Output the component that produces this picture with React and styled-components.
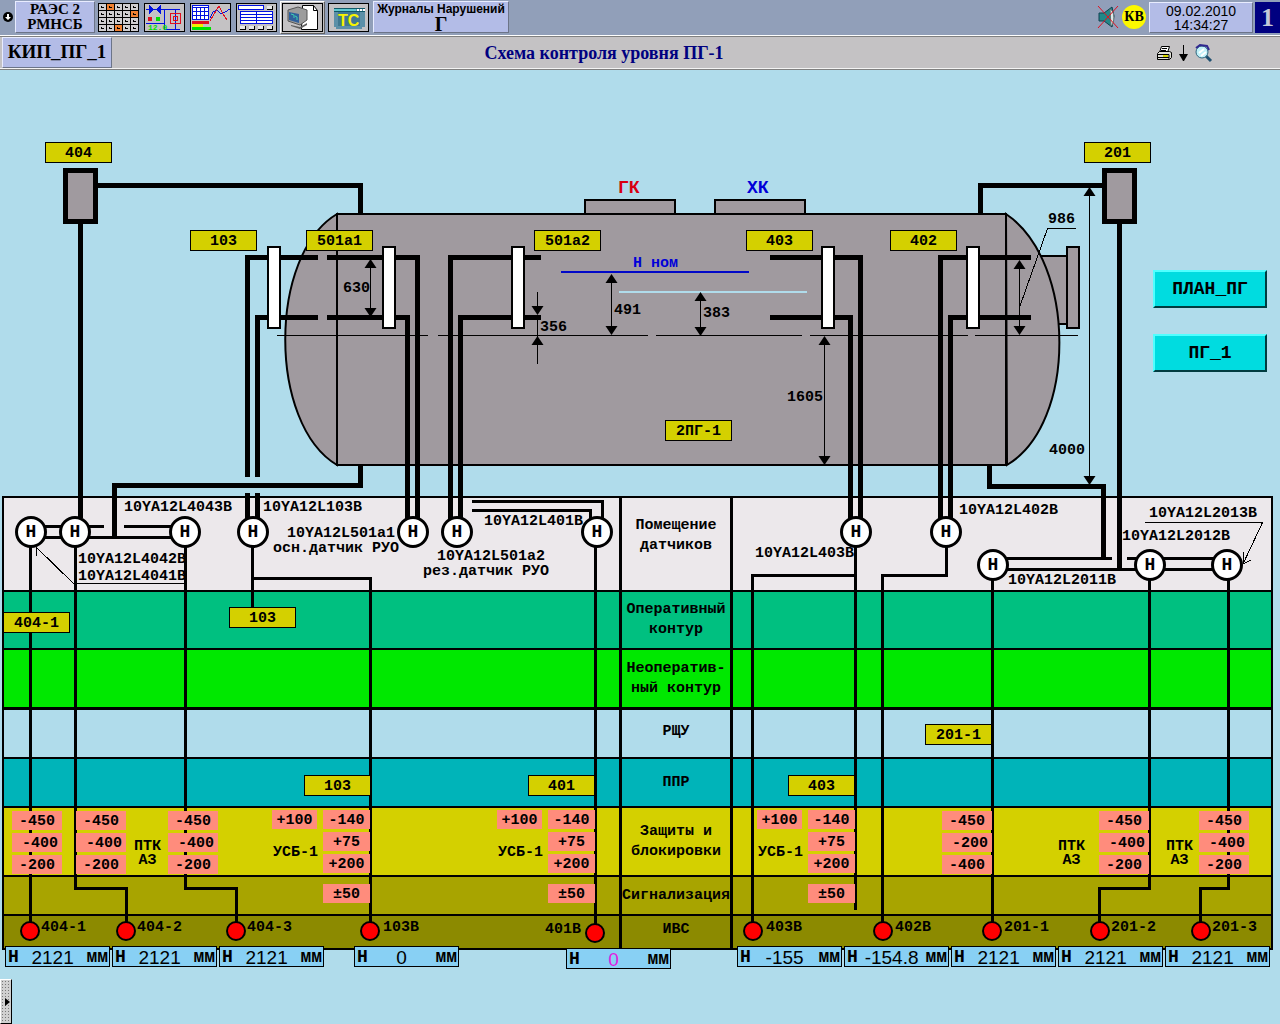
import React from 'react'
import styled, { createGlobalStyle, css } from 'styled-components'

const HEADER = 70

const INK = '#000'
const STEEL = '#a09a9f'
const YELLOW = '#d4d000'
const SKY = '#b0dceb'

// diagram coordinates: x is a share of the 1280 wide drawing, y is in pixels
const at = css`
  position: absolute;
  left: ${({ $x }) => ($x / 1280) * 100}%;
  top: ${({ $y }) => $y - HEADER}px;
`

const zones = [
  { label: ['Помещение', 'датчиков'], color: '#ece8eb', height: 94, lift: 16 },
  { label: ['Оперативный', 'контур'], color: '#00c080', height: 58 },
  { label: ['Неоператив-', 'ный контур'], color: '#00e800', height: 59 },
  { label: ['РЩУ'], color: SKY, height: 50, line: 3, lift: 4 },
  { label: ['ППР'], color: '#00b4b9', height: 49 },
  { label: ['Защиты и', 'блокировки'], color: YELLOW, height: 69 },
  { label: ['Сигнализация'], color: '#a8a400', height: 39 },
  { label: ['ИВС'], color: '#8c8a00', height: 34, lift: 4 },
]

const chips = [
  ['404', 45, 142], ['103', 190, 230], ['501а1', 306, 230], ['501а2', 534, 230],
  ['403', 746, 230], ['402', 890, 230], ['201', 1084, 142], ['2ПГ-1', 665, 420],
  ['404-1', 3, 612], ['103', 229, 607], ['201-1', 925, 724],
  ['103', 304, 775], ['401', 528, 775], ['403', 788, 775],
]

const sensors = [
  [31, 532], [75, 532], [185, 532], [253, 532], [413, 532], [457, 532],
  [597, 532], [856, 532], [946, 532], [993, 565], [1150, 565], [1227, 565],
]

const captions = [
  ['10YA12L4043B', 124, 508], ['10YA12L4042B', 78, 560], ['10YA12L4041B', 78, 577],
  ['10YA12L103B', 263, 508], ['10YA12L501a1', 287, 534], ['осн.датчик РУО', 273, 549],
  ['10YA12L401B', 484, 522], ['10YA12L501a2', 437, 557], ['рез.датчик РУО', 423, 572],
  ['10YA12L403B', 755, 554], ['10YA12L402B', 959, 511], ['10YA12L2013B', 1149, 514],
  ['10YA12L2012B', 1122, 537], ['10YA12L2011B', 1008, 581],
  ['630', 343, 289], ['491', 614, 311], ['356', 540, 328], ['383', 703, 314],
  ['1605', 787, 398], ['986', 1048, 220], ['4000', 1049, 451],
  ['УСБ-1', 273, 853], ['УСБ-1', 498, 853], ['УСБ-1', 758, 853],
  ['ПТК\nАЗ', 134, 847], ['ПТК\nАЗ', 1058, 847], ['ПТК\nАЗ', 1166, 847],
]

const settings = [
  [12, '-450', '-400', '-200'], [76, '-450', '-400', '-200'], [168, '-450', '-400', '-200'],
  [942, '-450', '-200', '-400'], [1099, '-450', '-400', '-200'], [1199, '-450', '-400', '-200'],
]

const alarms = [272, 497, 757]

const lamps = [
  ['404-1', 30, 931, 41], ['404-2', 126, 931, 137], ['404-3', 236, 931, 247],
  ['103В', 370, 931, 383], ['401В', 595, 933, 545], ['403В', 753, 931, 766],
  ['402В', 883, 931, 895], ['201-1', 992, 931, 1004], ['201-2', 1100, 931, 1111],
  ['201-3', 1201, 931, 1212],
]

const readings = [
  ['2121', 5, 946], ['2121', 112, 946], ['2121', 219, 946], ['0', 354, 946],
  ['0', 566, 948, '#e020e0'], ['-155', 737, 946], ['-154.8', 844, 946],
  ['2121', 951, 946], ['2121', 1058, 946], ['2121', 1165, 946],
]

// impulse lines between the vessel and the sensors
const pipes = [
  'M98 185.5H360.5V213', 'M80.5 224V518', 'M1102 185.5H980.5V213', 'M1119.5 224V569',
  'M318 257.5H247.5V477', 'M318 317.5H257.5V477', 'M247.5 493V520', 'M257.5 493V520',
  'M327 257.5H417.5V520', 'M327 317.5H407.5V520',
  'M541 257.5H450.5V520', 'M541 317.5H460.5V520',
  'M770 257.5H860.5V520', 'M770 317.5H850.5V520',
  'M1031 257.5H940.5V520', 'M1031 317.5H950.5V520',
  'M360.5 466V485.5H114.5V538', 'M989.5 466V486.5H1103.5V559',
]

const wires = [
  'M31 526.5H104', 'M124 526.5H185', 'M31 537.5H185',
  'M993 558.5H1112', 'M1127 558.5H1227', 'M993 569.5H1227',
  'M472 501.5H602.5V520', 'M472 510.5H590.5V522',
  'M30.5 545V922', 'M75.5 545V888.5H126.5V922', 'M185.5 545V888.5H236.5V922',
  'M252.5 545V607', 'M252.5 578.5H370.5V922', 'M595.5 545V924',
  'M855.5 545V910', 'M855.5 575.5H752.5V922', 'M946.5 545V575.5H882.5V922',
  'M992.5 578V922', 'M1149.5 578V888.5H1099.5V922', 'M1228.5 578V888.5H1200.5V922',
]

const thin = [
  'M277 335.5H428', 'M438 335.5H648', 'M656 335.5H802', 'M810 335.5H968', 'M975 335.5H1078',
  'M370.5 262V315', 'M611.5 276V333', 'M700.5 294V333', 'M824.5 338V462',
  'M1019.5 262V333', 'M1089.5 189V482', 'M537.5 292V312', 'M537.5 320V364',
  'M1076 228.5H1047.5L1020 306', 'M185 583.5H73.5L36 547V556',
  'M1145 522.5H1262.5L1243 564V552M1243 564L1251 560',
]

// [x, y of the tip, direction of the tip]
const arrows = [
  [370.5, 259, 1], [370.5, 317, -1], [611.5, 274, 1], [611.5, 335, -1],
  [700.5, 292, 1], [700.5, 336, -1], [537.5, 315, -1], [537.5, 336, 1],
  [824.5, 336, 1], [824.5, 465, -1], [1019.5, 260, 1], [1019.5, 335, -1],
  [1089.5, 187, 1], [1089.5, 485, -1],
]

const gauges = [268, 383, 512, 822, 967]

function Scheme() {
  return (
    <Drawing viewBox="0 70 1280 954" preserveAspectRatio="none" aria-hidden="true">
      <g fill={STEEL} stroke={INK} strokeWidth="2">
        <rect x="1035" y="256" width="32" height="68" />
        <rect x="1067" y="247" width="12" height="81" />
        <rect x="585" y="200" width="90" height="14" />
        <rect x="715" y="200" width="90" height="14" />
        <path d="M337 214C268 255 268 424 337 465Z" />
        <path d="M1006 214C1077 262 1077 424 1007 465Z" />
        <rect x="337" y="214" width="669" height="251" />
      </g>
      <g fill="none" stroke={INK} shapeRendering="crispEdges">
        <path d={pipes.join('')} strokeWidth="5" />
        <path d={wires.join('')} strokeWidth="3" />
      </g>
      <g fill={STEEL} stroke={INK} strokeWidth="5">
        <rect x="65.5" y="170.5" width="30" height="51" />
        <rect x="1104.5" y="170.5" width="30" height="51" />
      </g>
      <path d="M561 272H749" stroke="#0008c8" strokeWidth="2" />
      <path d="M619 292H807" stroke={SKY} strokeWidth="2" />
      <path d={thin.join('')} fill="none" stroke={INK} shapeRendering="crispEdges" />
      {arrows.map(([x, y, dir]) => (
        <path key={`${x}-${y}`} d={`M${x} ${y}l6 ${9 * dir}h-12z`} fill={INK} />
      ))}
      <g fill="#fff" stroke={INK} strokeWidth="2">
        {gauges.map((x) => <rect key={x} x={x} y="247" width="12" height="81" />)}
      </g>
    </Drawing>
  )
}

function KeysIcon() {
  const orange = [1, 9, 17]
  return (
    <svg width="41" height="29" aria-hidden="true" shapeRendering="crispEdges">
      <rect width="41" height="29" />
      {Array.from({ length: 20 }, (_, i) => {
        const x = 1 + (i % 5) * 8
        const y = 1 + Math.floor(i / 5) * 7
        return (
          <g key={i}>
            <rect x={x} y={y} width="7" height="6" fill={orange.includes(i) ? '#f08030' : '#d0ced0'} />
            <path d={`M${x + 2} ${y + 2}h1v1h2v1h-3z`} fill="#000" />
          </g>
        )
      })}
    </svg>
  )
}

function ValveIcon() {
  return (
    <svg width="41" height="29" aria-hidden="true" shapeRendering="crispEdges">
      <rect x=".5" y=".5" width="40" height="28" fill="#c4c2c4" stroke="#000" />
      <path d="M5 2v9l5-4h2l5 4V2l-5 4h-2z" fill="#0010e0" />
      <path d="M2 6.5H36M20.5 6V27M2 20.5H20M20 26.5H36M31.5 6V27" fill="none" stroke="#0010e0" />
      <path d="M26.5 10.5h10v10h-10zM29.5 13.5h4v4h-4z" fill="none" stroke="#e01020" />
      <rect x="4" y="14" width="4" height="4" fill="#e01020" />
      <rect x="12" y="14" width="4" height="4" fill="#00e000" />
      <text x="4" y="27" fill="#00e000" fontSize="8" fontFamily="Liberation Mono" fontWeight="bold">12.0</text>
    </svg>
  )
}

function TrendIcon() {
  return (
    <svg width="41" height="29" aria-hidden="true" shapeRendering="crispEdges">
      <rect x=".5" y=".5" width="40" height="28" fill="#c4c2c4" stroke="#000" />
      <rect x="2" y="2" width="17" height="15" fill="#0010e0" />
      <rect x="3" y="3" width="15" height="1" fill="#fff" />
      {Array.from({ length: 12 }, (_, i) => (
        <rect key={i} x={3 + (i % 4) * 4} y={5 + Math.floor(i / 4) * 4} width="3" height="3" fill="#fff" />
      ))}
      <path d="M20 15l3-6 4-2 4 4 4-2 5-3" fill="none" stroke="#0010e0" />
      <path d="M20 18l4-7 5-8 4 8 4 6" fill="none" stroke="#e01020" />
      <rect x="2" y="18" width="17" height="3" fill="#e01020" />
      <rect x="2" y="21" width="11" height="3" fill="#f0f000" />
      <rect x="2" y="24" width="19" height="3" fill="#00e000" />
    </svg>
  )
}

function TableIcon() {
  return (
    <svg width="41" height="29" aria-hidden="true" shapeRendering="crispEdges">
      <rect x=".5" y=".5" width="40" height="28" fill="#c4c2c4" stroke="#000" />
      <rect x="2.5" y="2.5" width="25" height="4" fill="#fff" stroke="#0010e0" />
      <rect x="4.5" y="8.5" width="32" height="12" fill="#fff" stroke="#0010e0" />
      <path d="M5 11.5h32M5 14.5h32M5 17.5h32M20.5 9v12" stroke="#0010e0" />
      {[[31, 3], [4, 23], [13, 23], [22, 23], [31, 23]].map(([x, y]) => (
        <g key={`${x}-${y}`}>
          <rect x={x} y={y} width="6" height="4" />
          <rect x={x} y={y} width="5" height="3" fill="#e8e8e8" />
        </g>
      ))}
    </svg>
  )
}

function ComputerIcon() {
  return (
    <svg width="41" height="29" aria-hidden="true">
      <rect x=".5" y=".5" width="40" height="28" fill="#c4c2c4" stroke="#000" />
      <path d="M20.5 2.5h11l4 5v19h-16z" fill="#fff" stroke="#000" />
      <path d="M31.5 2.5v5h4" fill="none" stroke="#000" />
      <path d="M6 7l10-3 9 3v10l-7 5-12-4z" fill="#9c9c9c" stroke="#555" />
      <path d="M7 9l10 2v9l-10-3z" fill="#30609c" />
      <path d="M9 11l3 1v3M13 13l2 1v3" fill="none" stroke="#40d0b0" />
      <path d="M9 22l9 2 7-4v2l-7 4-9-3z" fill="#606060" />
    </svg>
  )
}

function TsIcon() {
  return (
    <svg width="41" height="29" aria-hidden="true">
      <rect x=".5" y=".5" width="40" height="28" fill="#c4c2c4" stroke="#000" />
      <path d="M6 5h31v19h-3v2H8v-2H6z" fill="#5c90a8" />
      <path d="M6 5.5h31M6 8.5h31" stroke="#105868" />
      <rect x="6" y="6" width="22" height="2" fill="#60c8d0" />
      <path d="M29 6h2v2h-2zM32 6h2v2h-2zM35 6h2v2h-2z" fill="#fff" />
      <rect x="10" y="9" width="22" height="14" fill="#407890" />
      <text x="10" y="23" fill="#f8f400" fontSize="16" fontFamily="Liberation Sans" fontWeight="bold">ТС</text>
    </svg>
  )
}

function MuteIcon() {
  return (
    <svg width="22" height="24" aria-hidden="true">
      <path d="M2 8h5l8-6 2 9-2 11-8-6H2z" fill="#208888" stroke="#104050" />
      <path d="M13 4c5 2 5 14 1 17z" fill="#dde8e8" stroke="#607070" />
      <path d="M1 1l20 22M21 1L1 23" stroke="#e01020" />
    </svg>
  )
}

function PrinterIcon() {
  return (
    <svg width="17" height="16" aria-hidden="true">
      <path d="M5.5 1.5h8l-2 6h-8z" fill="#fff" stroke="#000" />
      <path d="M6 3.500h5M5 5.5h5" stroke="#000" />
      <path d="M1.500 8.500l2-2h10l2 1v5l-2 2h-12z" fill="#e0e0d8" stroke="#000" />
      <path d="M1 9.500h12v5M2 12.500h11" fill="none" stroke="#000" />
      <path d="M7 11h5" stroke="#d8d800" strokeWidth="2" />
    </svg>
  )
}

function DownIcon() {
  return (
    <svg width="9" height="16" aria-hidden="true">
      <path d="M4.5 0V10" stroke="#000" />
      <path d="M0 9h9l-4 7h-1z" />
    </svg>
  )
}

function LensIcon() {
  return (
    <svg width="19" height="20" aria-hidden="true">
      <path d="M12 13l5 5" stroke="#205070" strokeWidth="3" />
      <circle cx="8" cy="9" r="6" fill="#c0f0f8" stroke="#306880" />
      <path d="M2 5l4-3 7 1 2 4" fill="none" stroke="#302890" strokeWidth="2" />
      <path d="M5 10l5-4M7 13l5-4" stroke="#fff" strokeWidth="2" />
    </svg>
  )
}

const tools = [
  ['Панель', KeysIcon], ['Мнемосхемы', ValveIcon], ['Графики', TrendIcon],
  ['Таблицы', TableIcon], ['Печать', ComputerIcon], ['ТС', TsIcon],
]

export default function App() {
  return (
    <>
      <GlobalStyle />
      <Toolbar>
        <MenuButton aria-label="Меню">
          <svg width="12" height="12" aria-hidden="true">
            <circle cx="6" cy="6" r="5" />
            <path d="M5 3h2v3h2L6 9 3 6h2z" fill="#fff" />
          </svg>
        </MenuButton>
        <Station>РАЭС 2<br />РМНСБ</Station>
        <Tools>
          {tools.map(([name, Icon]) => (
            <ToolButton key={name} aria-label={name} $raised={name === 'Печать'}><Icon /></ToolButton>
          ))}
        </Tools>
        <Journal>Журналы Нарушений<b>Г</b></Journal>
        <Status>
          <MuteIcon />
          <Badge>КВ</Badge>
          <Clock>09.02.2010<br />14:34:27</Clock>
          <Screen>1</Screen>
        </Status>
      </Toolbar>
      <TitleBar>
        <FrameName>КИП_ПГ_1</FrameName>
        <Title>Схема контроля уровня ПГ-1</Title>
        <TitleTools>
          <PlainButton aria-label="Печать"><PrinterIcon /></PlainButton>
          <PlainButton aria-label="Вниз"><DownIcon /></PlainButton>
          <PlainButton aria-label="Поиск"><LensIcon /></PlainButton>
        </TitleTools>
      </TitleBar>

      <Board>
        <Zones>
          {zones.map(({ label, ...zone }) => (
            <Zone key={label[0]} $color={zone.color} $height={zone.height} $line={zone.line}>
              <ZoneName $lift={zone.lift}>
                {label.map((line) => <span key={line}>{line}</span>)}
              </ZoneName>
            </Zone>
          ))}
        </Zones>
        <Scheme />

        {captions.map(([text, x, y]) => (
          <Caption key={`${text}-${x}`} $x={x} $y={y}>{text}</Caption>
        ))}
        <Caption $x={633} $y={264} $color="#0000d8">Н ном</Caption>
        <Caption $x={618} $y={188} $color="#d80010" $large>ГК</Caption>
        <Caption $x={747} $y={188} $color="#0000d8" $large>ХК</Caption>

        {chips.map(([text, x, y]) => (
          <Chip key={`${x}-${y}`} $x={x} $y={y}>{text}</Chip>
        ))}
        {sensors.map(([x, y]) => <Sensor key={x} $x={x} $y={y}>Н</Sensor>)}

        {settings.map(([x, ...values]) => (
          <Setpoints key={x} $x={x} $y={811}>
            {values.map((v, i) => <Setpoint key={v} $indent={i === 1}>{v}</Setpoint>)}
          </Setpoints>
        ))}
        {alarms.map((x) => (
          <React.Fragment key={x}>
            <Setpoints $x={x} $y={810} $width={45}>
              <Setpoint>+100</Setpoint>
            </Setpoints>
            <Setpoints $x={x + 51} $y={810} $width={47}>
              <Setpoint>-140</Setpoint>
              <Setpoint>+75</Setpoint>
              <Setpoint>+200</Setpoint>
            </Setpoints>
            <Setpoints $x={x + 51} $y={884} $width={47}>
              <Setpoint>±50</Setpoint>
            </Setpoints>
          </React.Fragment>
        ))}

        {lamps.map(([name, x, y, textX]) => (
          <React.Fragment key={name}>
            <Lamp $x={x} $y={y} />
            <Caption $x={textX} $y={y - 3}>{name}</Caption>
          </React.Fragment>
        ))}
        {readings.map(([value, x, y, color]) => (
          <Reading key={x} $x={x} $y={y}>
            <b>Н</b>
            <Value $color={color}>{value}</Value>
            <b>мм</b>
          </Reading>
        ))}

        <Links $x={1153} $y={270}>
          <LinkButton>ПЛАН_ПГ</LinkButton>
          <LinkButton>ПГ_1</LinkButton>
        </Links>
        <Handle $x={0} $y={979} aria-label="Открыть панель">
          <svg width="5" height="10" aria-hidden="true"><path d="M0 1l5 4-5 4z" /></svg>
        </Handle>
      </Board>
    </>
  )
}

const GlobalStyle = createGlobalStyle`
  * { box-sizing: border-box; }
  body {
    margin: 0;
    background: ${SKY};
    color: ${INK};
    font-family: "Liberation Mono", monospace;
  }
  button {
    margin: 0;
    padding: 0;
    border: 0;
    background: none;
    color: inherit;
    font: inherit;
  }
  svg { display: block; }
`

const Toolbar = styled.header`
  display: flex;
  align-items: center;
  height: 36px;
  padding-bottom: 1px;
  background: #919fb9;
  border-bottom: 1px solid #fff;
`

const Plate = css`
  background: #b3bce7;
  border: 1px solid;
  border-color: #e8ecff #6c7488 #6c7488 #e8ecff;
`

const MenuButton = styled.button`
  display: flex;
  justify-content: center;
  width: 15px;
`

const Station = styled.div`
  ${Plate}
  width: 80px;
  height: 32px;
  font: bold 15px/15px "Liberation Serif", serif;
  text-align: center;
`

const Tools = styled.nav`
  display: flex;
  gap: 1px;
  margin: 0 2px 0 1px;
`

const ToolButton = styled.button`
  padding: 1px;
  border: 1px solid transparent;
  ${({ $raised }) => $raised && css`
    background: #c4c2c4;
    border-color: #fff #606060 #606060 #fff;
  `}
`

const Journal = styled.button`
  ${Plate}
  display: flex;
  flex-direction: column;
  align-items: center;
  width: 136px;
  height: 32px;
  font: bold 12px/14px "Liberation Sans", sans-serif;
  white-space: nowrap;

  b {
    font: bold 20px/16px "Liberation Serif", serif;
  }
`

const Status = styled.div`
  display: flex;
  align-items: center;
  margin-left: auto;
`

const Badge = styled.span`
  width: 24px;
  height: 24px;
  margin: 0 3px;
  border-radius: 50%;
  background: #fcf800;
  font: bold 14px/24px "Liberation Serif", serif;
  text-align: center;
`

const Clock = styled.time`
  ${Plate}
  width: 104px;
  height: 31px;
  padding-top: 1px;
  font: 14px/14px "Liberation Sans", sans-serif;
  text-align: center;
`

const Screen = styled.span`
  width: 25px;
  height: 31px;
  margin-left: 2px;
  background: #000080;
  color: #c4c8d8;
  font: bold 26px/32px "Liberation Serif", serif;
  text-align: center;
`

const TitleBar = styled.div`
  display: flex;
  align-items: center;
  height: 34px;
  padding-left: 2px;
  background: #c4c2c4;
  border-bottom: 1px solid #808080;
  box-shadow: inset 0 1px #808080, inset 0 -1px #f4f4f4;
`

const FrameName = styled.div`
  ${Plate}
  width: 110px;
  height: 31px;
  font: bold 19px/28px "Liberation Serif", serif;
  text-align: center;
`

const Title = styled.h1`
  flex: 1;
  margin: 0;
  color: #000080;
  font: bold 18px/30px "Liberation Serif", serif;
  text-align: center;
`

const TitleTools = styled.div`
  display: flex;
  align-items: center;
  gap: 6px;
  width: 184px;
  padding-left: 60px;
`

const PlainButton = styled.button`
  display: block;
`

const Board = styled.main`
  position: relative;
  min-height: calc(100vh - ${HEADER}px);
  padding: 426px 7px 0 2px;
  overflow: hidden;
`

const Zones = styled.div`
  border: 2px solid ${INK};
  border-top: 0;
`

const Zone = styled.section`
  display: grid;
  grid-template-columns: 615fr 114fr 538fr;
  height: ${({ $height }) => $height}px;
  border-top: ${({ $line = 2 }) => $line}px solid ${INK};
  background: ${({ $color }) => $color};
`

const ZoneName = styled.h2`
  display: flex;
  flex-direction: column;
  grid-column: 2;
  align-items: center;
  justify-content: center;
  margin: 0;
  padding-bottom: ${({ $lift = 0 }) => $lift}px;
  border: solid ${INK};
  border-width: 0 3px;
  font-size: 15px;
  line-height: 20px;
  white-space: nowrap;
`

const Drawing = styled.svg`
  position: absolute;
  top: 0;
  left: 0;
  width: 100%;
  height: 954px;
`

const Caption = styled.span`
  ${at}
  margin-top: -7px;
  color: ${({ $color = INK }) => $color};
  font-size: ${({ $large }) => ($large ? 18 : 15)}px;
  font-weight: bold;
  line-height: 14px;
  text-align: center;
  white-space: pre;
`

const Chip = styled.span`
  ${at}
  width: 67px;
  height: 21px;
  background: ${YELLOW};
  border: 1px solid ${INK};
  font-size: 15px;
  font-weight: bold;
  line-height: 22px;
  text-align: center;
`

const Sensor = styled.span`
  ${at}
  width: 32px;
  height: 32px;
  margin: -16px 0 0 -16px;
  background: #fff;
  border: 3px solid ${INK};
  border-radius: 50%;
  font-size: 18px;
  font-weight: bold;
  line-height: 26px;
  text-align: center;
`

const Setpoints = styled.div`
  ${at}
  display: grid;
  gap: 3px;
  width: ${({ $width = 50 }) => $width}px;
`

const Setpoint = styled.span`
  height: 19px;
  padding-left: ${({ $indent }) => ($indent ? 6 : 0)}px;
  background: #ff8c7c;
  font-size: 15px;
  font-weight: bold;
  line-height: 22px;
  text-align: center;
`

const Lamp = styled.i`
  ${at}
  width: 20px;
  height: 20px;
  margin: -10px 0 0 -10px;
  background: #ff0000;
  border: 2px solid ${INK};
  border-radius: 50%;
`

const Reading = styled.div`
  ${at}
  display: flex;
  justify-content: space-between;
  width: 105px;
  height: 21px;
  padding: 0 1px 0 2px;
  background: #88d0f4;
  border: 1px solid ${INK};
  font-size: 18px;
  line-height: 20px;
`

const Value = styled.span`
  color: ${({ $color = INK }) => $color};
  font: 19px/22px "Liberation Sans", sans-serif;
`

const Links = styled.nav`
  ${at}
  display: flex;
  flex-direction: column;
  gap: 26px;
`

const LinkButton = styled.button`
  width: 114px;
  height: 38px;
  background: #00dce0;
  border: 2px solid;
  border-color: #50ffff #003c40 #003c40 #50ffff;
  font-size: 18px;
  font-weight: bold;
`

const Handle = styled.button`
  ${at}
  display: flex;
  align-items: center;
  justify-content: flex-end;
  width: 12px;
  height: 45px;
  padding-right: 1px;
  background: radial-gradient(#777 1px, #d0d0d0 1px) 0 0 / 3px 3px;
  border: 1px solid;
  border-color: #fff #000 #000 #fff;
`
